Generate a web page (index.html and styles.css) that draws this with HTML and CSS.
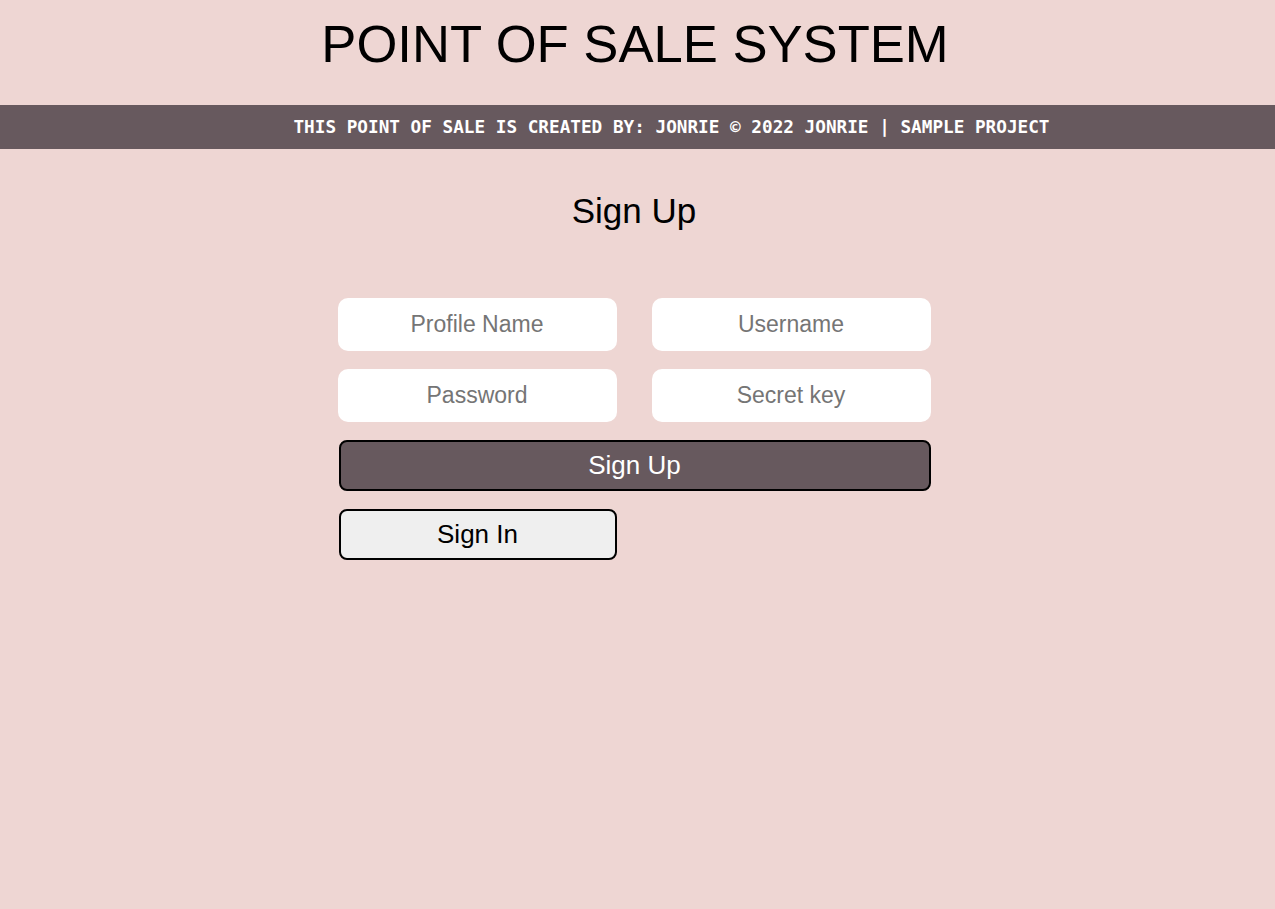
FILE: index.html
```html
<!DOCTYPE html>
<html lang="en">
<head>
<meta charset="utf-8">
<title>Point of Sale System</title>
<link rel="stylesheet" href="styles.css">
</head>
<body>
<header class="site-header">
  <h1 class="site-title">POINT OF SALE SYSTEM</h1>
</header>
<div class="banner">
  <p class="banner-text">THIS POINT OF SALE IS CREATED BY: JONRIE © 2022 JONRIE | SAMPLE PROJECT</p>
</div>
<main class="main">
  <h2 class="page-title">Sign Up</h2>
  <form class="signup-form">
    <div class="field-grid">
      <input class="field" type="text" placeholder="Profile Name">
      <input class="field" type="text" placeholder="Username">
      <input class="field" type="password" placeholder="Password">
      <input class="field" type="password" placeholder="Secret key">
    </div>
    <button class="btn btn-primary" type="button">Sign Up</button>
    <div class="secondary-row">
      <button class="btn btn-secondary" type="button">Sign In</button>
    </div>
  </form>
</main>
</body>
</html>
```

FILE: styles.css
```css
* {
  box-sizing: border-box;
}

html, body {
  margin: 0;
  padding: 0;
}

body {
  background: #eed6d3;
  font-family: "Liberation Sans", Arial, sans-serif;
  color: #000;
  min-height: 909px;
}

.site-header {
  height: 105px;
  padding-top: 13px;
  padding-right: 5px;
  text-align: center;
}

.site-title {
  margin: 0;
  font-size: 52.6px;
  font-weight: normal;
  line-height: 61px;
}

.banner {
  background: #67595e;
  height: 44px;
  display: flex;
  align-items: center;
  justify-content: center;
  padding-left: 68px;
}

.banner-text {
  margin: 0;
  color: #fff;
  font-family: "DejaVu Sans Mono", "Liberation Mono", monospace;
  font-size: 17.7px;
  font-weight: bold;
  white-space: nowrap;
}

.main {
  display: flex;
  flex-direction: column;
  align-items: center;
  padding-right: 7px;
}

.page-title {
  margin: 42px 0 0;
  font-size: 35px;
  font-weight: normal;
  line-height: 39px;
}

.signup-form {
  margin-top: 68px;
  width: 593px;
  display: flex;
  flex-direction: column;
  gap: 18px;
}

.field-grid {
  display: grid;
  grid-template-columns: 279px 279px;
  column-gap: 35px;
  row-gap: 18px;
}

.field {
  height: 53px;
  border: none;
  border-radius: 10px;
  background: #fff;
  font-family: "Liberation Sans", Arial, sans-serif;
  font-size: 23px;
  text-align: center;
  color: #000;
  outline: none;
  padding: 0 8px;
}

.field::placeholder {
  color: #757575;
}

.btn {
  height: 51px;
  border: 2px solid #000;
  border-radius: 8px;
  font-family: "Liberation Sans", Arial, sans-serif;
  font-size: 26px;
  cursor: pointer;
  padding: 0;
}

.btn-primary {
  margin-left: 1px;
  width: 592px;
  background: #67595e;
  color: #fff;
}

.secondary-row {
  display: flex;
  padding-left: 1px;
}

.btn-secondary {
  width: 278px;
  background: #efefef;
  color: #000;
}
```
